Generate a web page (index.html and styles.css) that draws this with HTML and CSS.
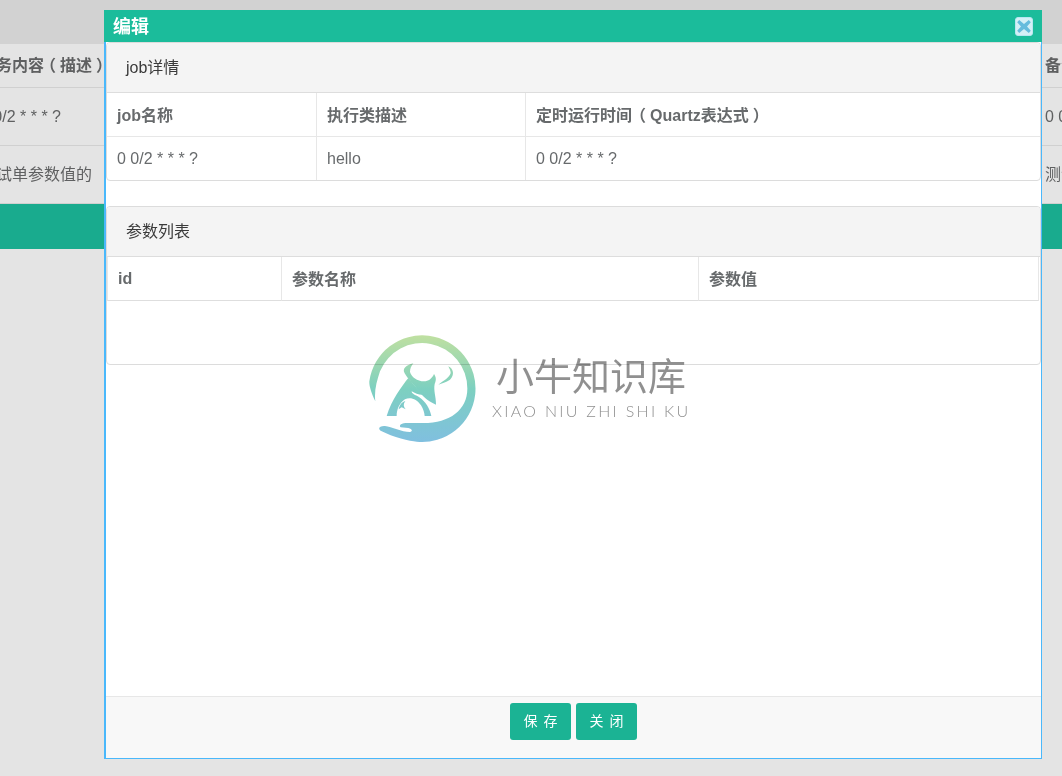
FILE: index.html
```html
<!DOCTYPE html>
<html lang="zh">
<head>
<meta charset="utf-8">
<title>编辑</title>
<link rel="stylesheet" href="styles.css">
</head>
<body>
<div class="backdrop">
  <div class="band"></div>
  <div class="bg-row bg-head"><span class="bg-left">任务内容<span class="po">（</span>描述<span class="pc">）</span></span><span class="bg-right">备注</span></div>
  <div class="bg-row bg-r1"><span class="bg-left">0 0/2 * * * ?</span><span class="bg-right">0 0/2</span></div>
  <div class="bg-row bg-r2"><span class="bg-left">测试单参数值的</span><span class="bg-right">测试</span></div>
  <div class="bg-bar"></div>
</div>

<section class="modal">
  <header class="modal-title">
    <span class="title-text">编辑</span>
    <svg class="close-icon" viewBox="0 0 18 19" aria-hidden="true">
      <rect x="0.5" y="0.5" width="17" height="18" rx="2.5" fill="#d4f0f6" stroke="#b9e6f0"/>
      <path d="M4.2 3 9 6.9 13.8 3 15.8 5.3 12 9.5 15.8 13.7 13.8 16 9 12.1 4.2 16 2.2 13.7 6 9.5 2.2 5.3Z" fill="#66bcdd"/>
    </svg>
  </header>
  <div class="modal-body">
    <div class="panel panel-job">
      <div class="panel-head">job详情</div>
      <table class="tbl tbl-job">
        <colgroup><col class="c-a"><col class="c-b"><col></colgroup>
        <tr><th><span class="cjk">job名称</span></th><th><span class="cjk">执行类描述</span></th><th><span class="cjk">定时运行时间<span class="po po-q">（</span>Quartz表达式<span class="pc">）</span></span></th></tr>
        <tr><td>0 0/2 * * * ?</td><td>hello</td><td>0 0/2 * * * ?</td></tr>
      </table>
    </div>
    <div class="panel panel-params">
      <div class="panel-head">参数列表</div>
      <table class="tbl tbl-params">
        <colgroup><col class="c-d"><col class="c-e"><col></colgroup>
        <tr><th>id</th><th><span class="cjk">参数名称</span></th><th><span class="cjk">参数值</span></th></tr>
      </table>
    </div>
  </div>
  <footer class="modal-foot">
    <button class="btn"><span class="btn-label">保 存</span></button>
    <button class="btn"><span class="btn-label">关 闭</span></button>
  </footer>
</section>

<div class="watermark">
  <svg class="wm-logo" viewBox="0 0 375 360" aria-hidden="true">
    <defs>
      <linearGradient id="wmg" gradientUnits="userSpaceOnUse" x1="0" y1="20" x2="0" y2="345">
        <stop offset="0" stop-color="#c0e0a0"/>
        <stop offset="0.5" stop-color="#7dd0c0"/>
        <stop offset="1" stop-color="#80bfe0"/>
      </linearGradient>
    </defs>
    <g fill="url(#wmg)">
      <path d="M46 220C34 195 27 172 28 160A160 160 0 1 1 170 341C150 339 100 328 62 308C52 300 60 293 75 294C95 296 125 312 150 312C160 310 155 302 145 300L122 298C115 292 125 285 140 285L190 285C270 285 322 245 322 182A136 136 0 0 0 60 130C50 160 42 190 46 220Z"/>
      <path d="M160 106C138 112 126 122 134 136C146 156 162 170 170 182C180 196 200 218 228 230C228 205 220 188 224 168C230 155 228 147 222 138C216 152 205 160 192 160C172 160 154 147 150 132C150 122 154 114 160 106Z"/>
      <path d="M145 150C125 175 95 215 80 264L110 264C110 245 118 225 135 214C150 206 170 212 183 232C190 243 193 254 194 264L214 264C209 240 197 222 178 208C165 200 155 198 155 190C165 196 180 202 190 200L170 180Z"/>
      <path d="M265 115C280 122 285 140 270 155C258 163 245 166 235 170C250 158 268 150 272 135C272 128 268 122 265 115Z"/>
      <path d="M116 244C118 232 125 222 136 219C129 228 130 236 137 244L125 238Z"/>
    </g>
  </svg>
  <div class="wm-text">
    <div class="wm-cn">小牛知识库</div>
    <div class="wm-en">XIAO NIU ZHI SHI KU</div>
  </div>
</div>
</body>
</html>
```
FILE: styles.css
```css
* { box-sizing: border-box; }
html, body { margin: 0; height: 100%; }
body {
  position: relative;
  width: 1062px;
  height: 776px;
  overflow: hidden;
  background: #e4e4e4;
  font-family: "Liberation Sans", "Noto Sans CJK SC", sans-serif;
  font-size: 16px;
  color: #676a6c;
}
.po { display: inline-block; margin-left: -4px; margin-right: 4px; }
.po-q { margin-left: -2px; margin-right: 4px; }
.pc { display: inline-block; margin-left: 4px; margin-right: -4px; }
.backdrop { display: flex; flex-direction: column; }
.band { height: 44px; background: #d2d2d2; }
.bg-row {
  display: flex;
  justify-content: space-between;
  align-items: center;
  border-bottom: 1px solid #d0d0d0;
  white-space: nowrap;
  overflow: hidden;
  color: #5f6061;
}
.bg-head { height: 44px; font-weight: 700; padding-bottom: 4px; }
.bg-r1 { height: 58px; }
.bg-r2 { height: 58px; padding-bottom: 4px; }
.bg-left { margin-left: -20px; }
.bg-right { margin-right: -30px; width: 47px; }
.bg-bar { height: 45px; background: #19ab8e; }

.modal {
  position: absolute;
  left: 104px;
  top: 10px;
  width: 938px;
  height: 749px;
  display: flex;
  flex-direction: column;
  background: #fff;
  border-left: 2px solid #4ab8fb;
  border-right: 1px solid #4ab8fb;
  border-bottom: 1px solid #4ab8fb;
}
.modal-title {
  flex: none;
  height: 32px;
  margin: 0 -1px 0 -2px;
  padding: 0 9px 2px 9px;
  display: flex;
  align-items: center;
  justify-content: space-between;
  background: #1bbc9b;
  color: #fff;
  font-size: 18px;
  font-weight: 700;
}
.close-icon { width: 18px; height: 19px; margin-top: 3px; }
.modal-body { flex: 1; min-height: 0; }
.panel {
  border: 1px solid #dcdcdc;
  border-radius: 4px;
  overflow: hidden;
  background: #fff;
}
.panel-job { height: 139px; }
.panel-params { height: 159px; margin-top: 25px; }
.panel-head {
  height: 50px;
  display: flex;
  align-items: center;
  padding: 0 0 4px 19px;
  background: #f4f4f4;
  border-bottom: 1px solid #dddddd;
  color: #3a3a3a;
}
.tbl {
  table-layout: fixed;
  border-collapse: separate;
  border-spacing: 0;
}
.tbl-job { width: 100%; }
.tbl-params { width: 932px; }
.c-a { width: 210px; }
.c-b { width: 209px; }
.c-d { width: 175px; }
.c-e { width: 417px; }
.tbl th, .tbl td {
  height: 44px;
  padding: 0 10px;
  text-align: left;
  border-right: 1px solid #e7e7e7;
  border-bottom: 1px solid #e7e7e7;
}
.cjk { display: inline-block; transform: translateY(-1px); }
.tbl-job th:last-child, .tbl-job td:last-child { border-right: 0; }
.tbl-job tr:last-child td { border-bottom: 0; }
.tbl-params th:first-child { border-left: 1px solid #e7e7e7; }
.tbl-params th { border-bottom-color: #dedede; }
.modal-foot {
  flex: none;
  height: 62px;
  padding-top: 6px;
  display: flex;
  justify-content: center;
  align-items: flex-start;
  gap: 5px;
  background: #f8f8f8;
  border-top: 1px solid #e7e7e7;
}
.btn {
  width: 61px;
  height: 37px;
  padding: 0 0 4px 1px;
  border: 0;
  border-radius: 3px;
  background: #1bb394;
  color: #fff;
  font: 14px "Liberation Sans", "Noto Sans CJK SC", sans-serif;
  letter-spacing: 1px;
}
.watermark {
  position: absolute;
  left: 360px;
  top: 328px;
  display: flex;
  mix-blend-mode: multiply;
  pointer-events: none;
}
.wm-logo { width: 125px; height: 120px; flex: none; }
.wm-text { margin: 24px 0 0 7px; display: flex; flex-direction: column; align-items: flex-start; }
.wm-cn { margin: 2px 0 0 4px; font-size: 38px; line-height: 46px; font-weight: 400; color: #909090; white-space: nowrap; }
.wm-en { margin-top: 1px; font-family: Lato, sans-serif; font-size: 16px; line-height: 20px; letter-spacing: 2.3px; font-weight: 300; color: #8f8f8f; white-space: nowrap; }
```
